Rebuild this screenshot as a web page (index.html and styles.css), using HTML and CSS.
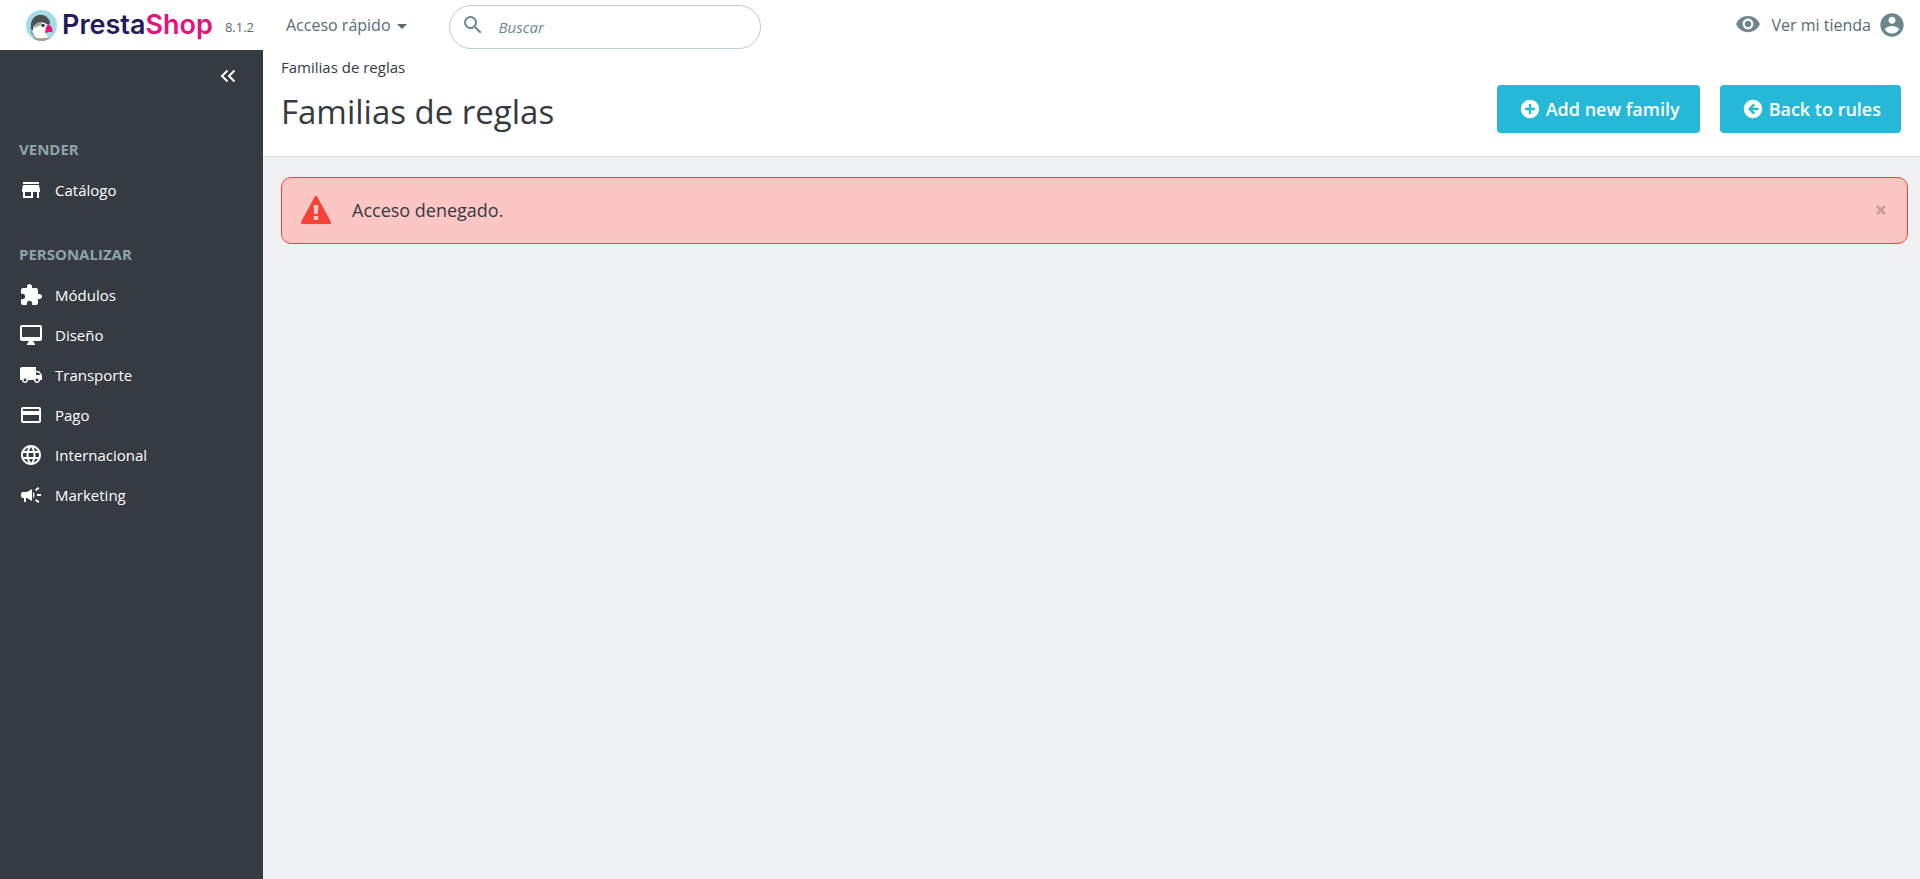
FILE: index.html
```html
<!DOCTYPE html>
<html lang="es">
<head>
  <meta charset="UTF-8" />
  <meta name="viewport" content="width=device-width, initial-scale=1.0"/>
  <title>Familias de reglas - PrestaShop</title>
  <link rel="stylesheet" href="styles.css">
</head>
<body>
  <header class="main-header">
    <div class="brand">
      <a href="#" class="logo">
        <svg class="logo-bird" viewBox="0 0 32 32" aria-hidden="true">
          <circle cx="16" cy="16" r="16" fill="#a4dbe8"/>
          <path d="M5 18C4.500 10 9 5 15 5c5 0 9 3 10 9l-3 1-7-2-7 3-1 5c-1.500-1-2-2-2-3z" fill="#4b4f4f"/>
          <path d="M7.500 19c2-5 6-7 10-6 3 .5 4.500 2 4.500 4l-2 7 3 4-5 2h-5c-4-2-6-6-5.500-11z" fill="#fff"/>
          <path d="M5 17c0 4 1.500 8 5 11.500C5.500 26 4 22 5 17z" fill="#7d8585"/>
          <path d="M8 18c1-4 5-6 9-5.500-1 3-5 5.500-9 5.500z" fill="#9fa5a5"/>
          <ellipse cx="17.500" cy="16" rx="2" ry="1.500" fill="#33383a"/>
          <path d="M23.500 14.500c2.500 2 4 5 4 8.500-1 0-1.500-.3-2.500-.5-1.500 0-3 1-5 1.500-.3-4 .5-7.500 3.500-9.500z" fill="#e5127d"/>
          <path d="M6.500 28c6 1.500 13 1.500 19 0C23 30.500 20 32 16 32s-7-1.500-9.500-4z" fill="#ad9b84"/>
        </svg>
        <span class="logo-text">Presta<span class="logo-shop">Shop</span></span>
      </a>
      <span class="version">8.1.2</span>
    </div>
    <button type="button" class="quick-access">Acceso rápido <span class="caret"></span></button>
    <form class="search">
      <svg class="search-icon" viewBox="0 0 24 24" aria-hidden="true"><path d="M15.500 14h-.79l-.28-.27A6.471 6.471 0 0 0 16 9.500 6.500 6.500 0 1 0 9.500 16c1.610 0 3.090-.59 4.230-1.570l.27.28v.79l5 4.990L20.490 19l-4.990-5zm-6 0C7.010 14 5 11.990 5 9.500S7.010 5 9.500 5 14 7.010 14 9.500 11.990 14 9.500 14z"/></svg>
      <input type="text" placeholder="Buscar" aria-label="Buscar">
    </form>
    <div class="header-right">
      <a href="#" class="shop-link">
        <svg class="icon-eye" viewBox="0 0 24 24" aria-hidden="true"><path d="M12 4.500C7 4.500 2.730 7.610 1 12c1.730 4.390 6 7.500 11 7.500s9.270-3.110 11-7.500c-1.730-4.390-6-7.500-11-7.500zM12 17c-2.760 0-5-2.240-5-5s2.240-5 5-5 5 2.240 5 5-2.240 5-5 5zm0-8c-1.660 0-3 1.340-3 3s1.340 3 3 3 3-1.340 3-3-1.340-3-3-3z"/></svg>
        Ver mi tienda
      </a>
      <button type="button" class="profile" aria-label="Perfil">
        <svg viewBox="0 0 24 24" aria-hidden="true"><path d="M12 2C6.480 2 2 6.480 2 12s4.480 10 10 10 10-4.480 10-10S17.520 2 12 2zm0 3c1.660 0 3 1.340 3 3s-1.340 3-3 3-3-1.340-3-3 1.340-3 3-3zm0 14.200c-2.500 0-4.710-1.280-6-3.220.03-1.990 4-3.080 6-3.080 1.990 0 5.970 1.090 6 3.080-1.290 1.940-3.500 3.220-6 3.220z"/></svg>
      </button>
    </div>
  </header>

  <div class="layout">
    <nav class="sidebar">
      <button type="button" class="menu-collapse" aria-label="Contraer menú">
        <svg viewBox="0 0 16 14" aria-hidden="true"><path d="M7.500 1.500L2 7l5.500 5.500M14.500 1.500L9 7l5.500 5.500"/></svg>
      </button>
      <h2 class="menu-title">Vender</h2>
      <ul class="menu">
        <li><a href="#"><svg viewBox="0 0 24 24" aria-hidden="true"><path d="M20 4H4v2h16V4zm1 10v-2l-1-5H4l-1 5v2h1v6h10v-6h4v6h2v-6h1zm-9 4H6v-4h6v4z"/></svg>Catálogo</a></li>
      </ul>
      <h2 class="menu-title">Personalizar</h2>
      <ul class="menu">
        <li><a href="#"><svg viewBox="0 0 24 24" aria-hidden="true"><path d="M20.500 11H19V7c0-1.100-.9-2-2-2h-4V3.500C13 2.120 11.880 1 10.500 1S8 2.120 8 3.500V5H4c-1.100 0-1.990.9-1.990 2v3.800H3.500c1.490 0 2.700 1.210 2.700 2.700s-1.210 2.700-2.700 2.700H2V20c0 1.100.9 2 2 2h3.800v-1.500c0-1.490 1.210-2.700 2.700-2.700 1.490 0 2.700 1.210 2.700 2.700V22H17c1.100 0 2-.9 2-2v-4h1.500c1.380 0 2.500-1.120 2.500-2.500S21.880 11 20.500 11z"/></svg>Módulos</a></li>
        <li><a href="#"><svg viewBox="0 0 24 24" aria-hidden="true"><path d="M21 2H3c-1.100 0-2 .9-2 2v12c0 1.100.9 2 2 2h7l-2 3v1h8v-1l-2-3h7c1.100 0 2-.9 2-2V4c0-1.100-.9-2-2-2zm0 12H3V4h18v10z"/></svg>Diseño</a></li>
        <li><a href="#"><svg viewBox="0 0 24 24" aria-hidden="true"><path d="M20 8h-3V4H3c-1.100 0-2 .9-2 2v11h2c0 1.660 1.340 3 3 3s3-1.340 3-3h6c0 1.660 1.340 3 3 3s3-1.340 3-3h2v-5l-3-4zM6 18.500c-.83 0-1.500-.67-1.500-1.500s.67-1.500 1.500-1.500 1.500.67 1.500 1.500-.67 1.500-1.500 1.500zm13.500-9l1.960 2.500H17V9.500h2.500zm-1.500 9c-.83 0-1.500-.67-1.500-1.500s.67-1.500 1.500-1.500 1.500.67 1.500 1.500-.67 1.500-1.500 1.500z"/></svg>Transporte</a></li>
        <li><a href="#"><svg viewBox="0 0 24 24" aria-hidden="true"><path d="M20 4H4c-1.110 0-1.990.89-1.990 2L2 18c0 1.110.89 2 2 2h16c1.110 0 2-.89 2-2V6c0-1.110-.89-2-2-2zm0 14H4v-6h16v6zm0-10H4V6h16v2z"/></svg>Pago</a></li>
        <li><a href="#"><svg viewBox="0 0 24 24" aria-hidden="true"><path d="M11.990 2C6.470 2 2 6.480 2 12s4.470 10 9.990 10C17.520 22 22 17.520 22 12S17.520 2 11.990 2zm6.930 6h-2.950c-.32-1.250-.78-2.450-1.380-3.560 1.840.63 3.370 1.910 4.330 3.560zM12 4.040c.83 1.200 1.480 2.530 1.910 3.960h-3.820c.43-1.430 1.080-2.760 1.910-3.960zM4.260 14C4.100 13.360 4 12.690 4 12s.1-1.360.26-2h3.380c-.08.66-.14 1.320-.14 2s.06 1.340.14 2H4.260zm.82 2h2.950c.32 1.250.78 2.450 1.380 3.560-1.840-.63-3.370-1.900-4.330-3.560zm2.950-8H5.080c.96-1.660 2.490-2.930 4.330-3.560C8.810 5.550 8.350 6.750 8.030 8zM12 19.960c-.83-1.200-1.480-2.530-1.910-3.960h3.820c-.43 1.430-1.080 2.760-1.910 3.960zM14.340 14H9.660c-.09-.66-.16-1.320-.16-2s.07-1.350.16-2h4.680c.09.65.16 1.320.16 2s-.07 1.340-.16 2zm.25 5.560c.6-1.110 1.060-2.310 1.380-3.560h2.950c-.96 1.650-2.490 2.930-4.330 3.560zM16.360 14c.08-.66.14-1.320.14-2s-.06-1.340-.14-2h3.380c.16.64.26 1.310.26 2s-.1 1.360-.26 2h-3.380z"/></svg>Internacional</a></li>
        <li><a href="#"><svg viewBox="0 0 24 24" aria-hidden="true"><path d="M18 11v2h4v-2h-4zm-2 6.610c.96.71 2.210 1.650 3.200 2.390.4-.53.8-1.070 1.200-1.600-.99-.74-2.240-1.680-3.200-2.400-.4.540-.8 1.080-1.200 1.610zM20.400 5.600c-.4-.53-.8-1.070-1.200-1.600-.99.740-2.240 1.680-3.200 2.400.4.530.8 1.070 1.200 1.600.96-.72 2.210-1.650 3.200-2.400zM4 9c-1.100 0-2 .9-2 2v2c0 1.100.9 2 2 2h1v4h2v-4h1l5 3V6L8 9H4zm11.500 3c0-1.330-.58-2.530-1.500-3.350v6.690c.92-.81 1.500-2.010 1.500-3.340z"/></svg>Marketing</a></li>
      </ul>
    </nav>

    <main class="content">
      <div class="page-head">
        <div class="page-titles">
          <div class="breadcrumb">Familias de reglas</div>
          <h1>Familias de reglas</h1>
        </div>
        <div class="toolbar">
          <a href="#" class="btn"><svg viewBox="0 0 24 24" aria-hidden="true"><path d="M12 2C6.480 2 2 6.480 2 12s4.480 10 10 10 10-4.480 10-10S17.520 2 12 2zm5.500 11.300h-4.200v4.200h-2.600v-4.200H6.500v-2.600h4.200V6.500h2.600v4.200h4.200v2.600z"/></svg>Add new family</a>
          <a href="#" class="btn"><svg viewBox="0 0 24 24" aria-hidden="true"><path d="M12 2C6.480 2 2 6.480 2 12s4.480 10 10 10 10-4.480 10-10S17.520 2 12 2zm6 11.300h-6.600l2.900 2.900-1.800 1.800-6-6 6-6 1.800 1.800-2.900 2.900H18v2.600z"/></svg>Back to rules</a>
        </div>
      </div>
      <div class="alert" role="alert">
        <svg class="alert-icon" viewBox="0 0 30 28" aria-hidden="true">
          <path d="M15 1.500L28.500 26.500H1.500z" fill="#f44336" stroke="#f44336" stroke-width="3" stroke-linejoin="round"/>
          <path d="M12.500 9h5l-.7 9h-3.600zM12.800 20h4.400v4h-4.400z" fill="#fbc6c3"/>
        </svg>
        <p>Acceso denegado.</p>
        <button type="button" class="close" aria-label="Cerrar">
          <svg viewBox="0 0 12 12" aria-hidden="true"><path d="M2 2l8 8M10 2l-8 8"/></svg>
        </button>
      </div>
    </main>
  </div>
</body>
</html>
```
FILE: styles.css
```css
* {
  box-sizing: border-box;
}
body {
  margin: 0;
  min-height: 100vh;
  display: flex;
  flex-direction: column;
  font-family: "Open Sans", sans-serif;
  font-size: 15px;
  background-color: #eff1f2;
  color: #363a41;
}
a {
  text-decoration: none;
}
button {
  padding: 0;
  border: none;
  background: none;
  font-family: inherit;
  cursor: pointer;
}
svg {
  display: block;
  flex-shrink: 0;
}

/* header */
.main-header {
  display: flex;
  align-items: center;
  height: 50px;
  background-color: #fff;
}
.brand {
  display: flex;
  align-items: center;
  width: 286px;
  padding-left: 26px;
  gap: 12px;
}
.logo {
  display: flex;
  align-items: center;
  gap: 5px;
}
.logo-bird {
  width: 31px;
  height: 31px;
}
.logo-text {
  font-family: Inter, sans-serif;
  font-size: 27px;
  line-height: 32px;
  font-weight: 600;
  color: #251b5b;
}
.logo-shop {
  color: #e5127d;
}
.version {
  padding-top: 4px;
  font-size: 13px;
  color: #5f666d;
}
.quick-access {
  display: flex;
  align-items: center;
  gap: 6px;
  font-size: 16px;
  color: #576c72;
}
.caret {
  margin-top: 2px;
  border: 5px solid transparent;
  border-top-color: #576c72;
  border-bottom: none;
}
.search {
  display: flex;
  align-items: center;
  width: 312px;
  height: 44px;
  margin: 4px 0 0 42px;
  padding: 0 14px 0 11px;
  border: 1px solid #bbcdd2;
  border-radius: 22px;
  gap: 14px;
}
.search-icon {
  width: 24px;
  height: 24px;
  margin-bottom: 4px;
  fill: #6c868e;
}
.search input {
  flex: 1;
  min-width: 0;
  padding: 0;
  border: none;
  outline: none;
  background: none;
  font-family: inherit;
  font-size: 15px;
  font-style: italic;
}
.search input::placeholder {
  color: #6c868e;
}
.header-right {
  display: flex;
  align-items: center;
  margin-left: auto;
  padding-right: 14px;
  gap: 7px;
}
.shop-link {
  display: flex;
  align-items: center;
  gap: 11px;
  font-size: 16px;
  color: #576c72;
}
.icon-eye {
  width: 26px;
  height: 26px;
  margin-bottom: 3px;
  fill: #6c868e;
}
.profile svg {
  width: 28px;
  height: 28px;
  fill: #6c868e;
}

/* sidebar */
.layout {
  display: flex;
  flex: 1;
}
.sidebar {
  width: 263px;
  flex-shrink: 0;
  background-color: #363a41;
}
.menu-collapse {
  display: block;
  margin: 19px 27px 56px auto;
}
.menu-collapse svg {
  width: 16px;
  height: 14px;
  fill: none;
  stroke: #fff;
  stroke-width: 2;
}
.menu-title {
  margin: 0;
  padding-left: 19px;
  font-size: 15px;
  line-height: 20px;
  font-weight: 700;
  text-transform: uppercase;
  color: #8ea4ab;
}
.menu {
  margin: 0;
  padding: 11px 0 34px;
  list-style: none;
}
.menu a {
  display: flex;
  align-items: center;
  height: 40px;
  padding-left: 19px;
  gap: 12px;
  color: #fff;
}
.menu svg {
  width: 24px;
  height: 24px;
  fill: #fff;
}

/* content */
.content {
  flex: 1;
  min-width: 0;
}
.page-head {
  display: flex;
  justify-content: space-between;
  align-items: flex-start;
  padding: 7px 19px 20px 18px;
  background-color: #fff;
  border-bottom: 1px solid #dddfe1;
}
.breadcrumb {
  line-height: 20px;
}
h1 {
  margin: 11px 0 0;
  font-size: 33px;
  line-height: 48px;
  font-weight: 400;
}
.toolbar {
  display: flex;
  padding-top: 28px;
  gap: 20px;
}
.btn {
  display: flex;
  align-items: center;
  height: 48px;
  padding: 0 20px 0 22px;
  gap: 5px;
  border-radius: 4px;
  background-color: #25b9d7;
  color: #fff;
  font-size: 18px;
  font-weight: 600;
}
.btn svg {
  width: 22px;
  height: 22px;
  fill: #fff;
}
.alert {
  display: flex;
  align-items: center;
  height: 67px;
  margin: 20px 12px 0 18px;
  padding: 0 20px 2px 19px;
  border: 1px solid #f44336;
  border-radius: 10px;
  background-color: #fbc6c3;
}
.alert-icon {
  width: 30px;
  height: 28px;
}
.alert p {
  margin: 0 0 0 21px;
  font-size: 18px;
}
.close {
  margin-left: auto;
}
.close svg {
  width: 12px;
  height: 12px;
  stroke: #c99e9c;
  stroke-width: 3;
}
```
